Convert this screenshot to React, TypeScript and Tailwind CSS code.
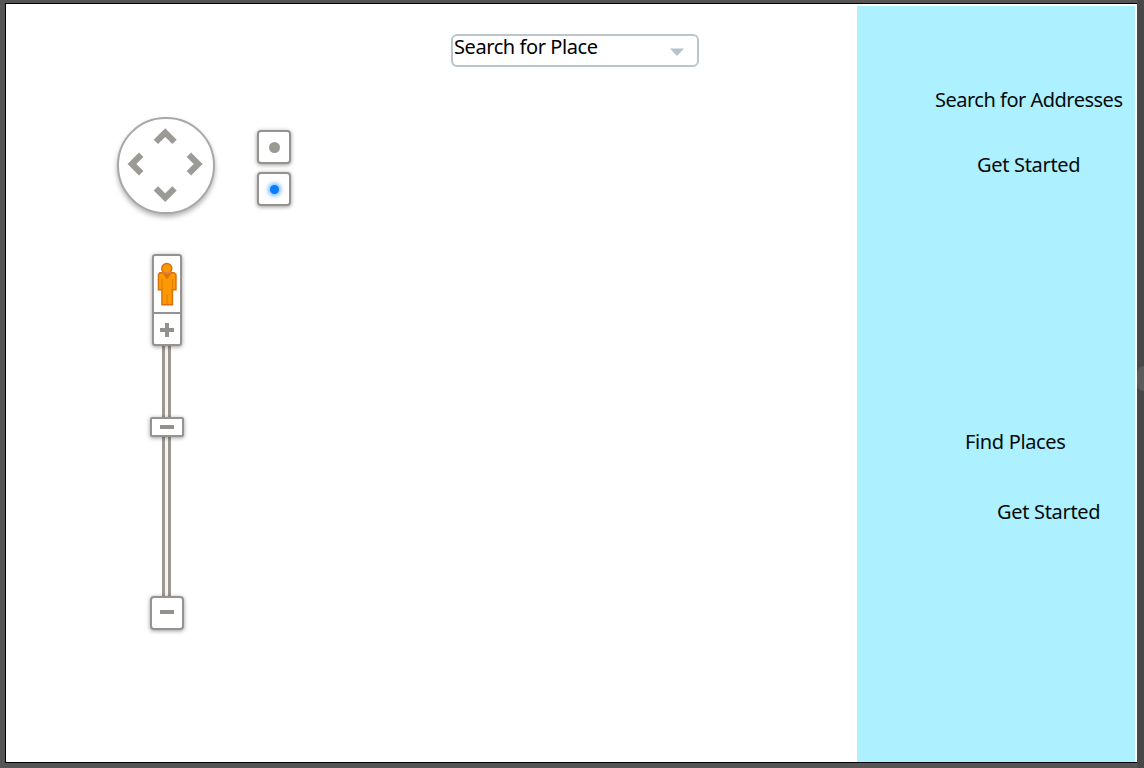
import React from "react";

const label = "whitespace-nowrap text-[20px] leading-[28px] text-[#05090a]";

function PanControl() {
  return (
    <div className="h-[97px] w-[98px] rounded-full border-2 border-[#a9a8a6] bg-white shadow-[0_3px_5px_rgba(0,0,0,0.3)]">
      <svg viewBox="119 119 94 93" className="h-full w-full" fill="none" stroke="#9c9a94" strokeWidth="6.2">
        <path d="M155.9 141.9 165.2 132.6 174.5 141.9" />
        <path d="M155.9 188.4 165.2 197.7 174.5 188.4" />
        <path d="M141.2 154.7 131.9 164 141.2 173.3" />
        <path d="M188.9 154.7 198.2 164 188.9 173.3" />
      </svg>
    </div>
  );
}

function ModeButton({ active }: { active?: boolean }) {
  return (
    <button className="flex h-[34px] w-[34px] items-center justify-center rounded-[4px] border-2 border-[#959390] bg-white pt-px pl-px shadow-[0_1px_4px_rgba(0,0,0,0.4)]">
      {active ? (
        <span className="h-[9px] w-[9px] rounded-full bg-[#087cff] shadow-[0_0_4px_2px_rgba(40,145,255,0.65)]" />
      ) : (
        <span className="h-[11px] w-[11px] rounded-full bg-[#9b9993]" />
      )}
    </button>
  );
}

function Pegman() {
  return (
    <svg viewBox="157 261 20 46" className="h-[46px] w-[20px]" fill="#fb9903" stroke="#d96e09" strokeWidth="1.4">
      <path d="M160 272.7h14l2 1.8v15.3h-3.5v15h-10.6v-15h-3.5v-15.3z" />
      <path d="M163 273.5h8l-4 6z" fill="#df7108" stroke="none" />
      <path d="M162 279v10M172.4 279v10M167 294v10" strokeWidth="0.7" />
      <circle cx="166.8" cy="268.5" r="5" />
      <path d="M162.8 272.2q4 2.6 8 0" stroke="#c98a58" strokeWidth="1.4" fill="none" />
    </svg>
  );
}

function Track({ className }: { className: string }) {
  return <div className={"mr-px w-[9px] border-x-[3px] border-[#9b9791] bg-[#faf5f3] " + className} />;
}

export default function App() {
  return (
    <div className="flex h-[768px] w-[1144px] overflow-hidden bg-[#555555] pt-[3px] pl-[5px] font-['Noto_Sans',sans-serif]">
      <div className="flex h-[760px] w-[1132px] border-y border-l border-black bg-white">
        <main className="flex w-[851px] pr-[158px]">
          <section className="w-[445px] pt-[113px] pl-[111px]">
            <div className="flex gap-[42px]">
              <PanControl />
              <div className="flex flex-col gap-[8px] pt-[13px]">
                <ModeButton />
                <ModeButton active />
              </div>
            </div>
            <div className="pt-[40px] pl-[33px]">
              <div className="flex w-[34px] flex-col items-center">
                <div className="z-10 flex h-[92px] w-[30px] flex-col rounded-[3px] border-2 border-[#959390] bg-white shadow-[0_1px_4px_rgba(0,0,0,0.4)]">
                  <div className="flex h-[58px] justify-center border-b-2 border-[#959390] pt-[5px]">
                    <Pegman />
                  </div>
                  <div className="flex flex-1 items-center justify-center pt-px">
                    <svg viewBox="0 0 14 14" className="h-[14px] w-[14px]" stroke="#93918d" strokeWidth="4">
                      <path d="M0 7h14M7 0v14" />
                    </svg>
                  </div>
                </div>
                <Track className="h-[71px]" />
                <div className="z-10 flex h-[20px] w-[34px] items-center justify-center rounded-[2px] border-2 border-[#959390] bg-white shadow-[0_1px_4px_rgba(0,0,0,0.4)]">
                  <span className="h-[4px] w-[14px] bg-[#93918d]" />
                </div>
                <Track className="h-[159px]" />
                <div className="z-10 flex h-[34px] w-[34px] items-center justify-center rounded-[4px] border-2 border-[#959390] bg-white shadow-[0_1px_4px_rgba(0,0,0,0.4)]">
                  <span className="mb-[2px] h-[4px] w-[14px] bg-[#93918d]" />
                </div>
              </div>
            </div>
          </section>
          <section className="pt-[30px]">
            <div className="flex h-[33px] w-[248px] items-start justify-between rounded-[6px] border-2 border-[#bac5ce] bg-white pr-[13px] pl-px">
              <span className="-mt-[3px] whitespace-nowrap text-[20px] leading-[28px] tracking-[-0.42px] text-black">Search for Place</span>
              <svg viewBox="0 0 14 8" className="mt-[12px] h-[8px] w-[14px]" fill="#b5c2cc">
                <path d="M0 0.5h14L7 8z" />
              </svg>
            </div>
          </section>
        </main>
        <aside className="mt-[2px] flex w-[278px] flex-col items-start bg-[#adf0ff]">
          <h2 className={label + " mt-[80px] ml-[78px] tracking-[-0.5px]"}>Search for Addresses</h2>
          <button className={label + " mt-[37px] ml-[120px] tracking-[-0.32px]"}>Get Started</button>
          <h2 className={label + " mt-[249px] ml-[108px] tracking-[-0.35px]"}>Find Places</h2>
          <button className={label + " mt-[42px] ml-[140px] tracking-[-0.32px]"}>Get Started</button>
        </aside>
      </div>
      <div className="-mt-[3px] flex h-[768px] w-[7px] items-start overflow-hidden bg-[#484848] pt-[366px]">
        <span className="h-[25px] w-[14px] shrink-0 rounded-full bg-[#5b5b5b]" />
      </div>
    </div>
  );
}
